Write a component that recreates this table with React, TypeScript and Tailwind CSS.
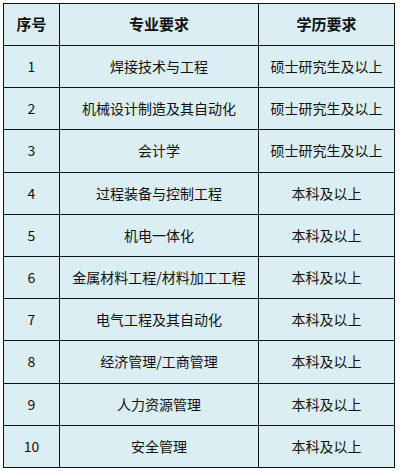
const rows = [
  ['1', '焊接技术与工程', '硕士研究生及以上'],
  ['2', '机械设计制造及其自动化', '硕士研究生及以上'],
  ['3', '会计学', '硕士研究生及以上'],
  ['4', '过程装备与控制工程', '本科及以上'],
  ['5', '机电一体化', '本科及以上'],
  ['6', '金属材料工程/材料加工工程', '本科及以上'],
  ['7', '电气工程及其自动化', '本科及以上'],
  ['8', '经济管理/工商管理', '本科及以上'],
  ['9', '人力资源管理', '本科及以上'],
  ['10', '安全管理', '本科及以上'],
];

export default function App() {
  return (
    <div className="w-[400px] h-[471px] bg-white pl-[3px] pt-[3px]" style={{ fontFamily: '"Noto Sans CJK SC", "Liberation Sans", sans-serif' }}>
      <table className="w-[391px] table-fixed border-collapse border border-[#111] bg-[#daeef3] text-[14px] text-[#111]">
        <colgroup>
          <col className="w-[56px]" />
          <col className="w-[199px]" />
          <col className="w-[136px]" />
        </colgroup>
        <thead>
          <tr className="h-[42px]">
            <th className="border border-[#111] text-center font-bold text-[15px]">序号</th>
            <th className="border border-[#111] text-center font-bold text-[15px]">专业要求</th>
            <th className="border border-[#111] text-center font-bold text-[15px]">学历要求</th>
          </tr>
        </thead>
        <tbody>
          {rows.map((r) => (
            <tr key={r[0]} className="h-[42.2px]">
              <td className="border border-[#111] text-center">{r[0]}</td>
              <td className="border border-[#111] text-center">{r[1]}</td>
              <td className="border border-[#111] text-center">{r[2]}</td>
            </tr>
          ))}
        </tbody>
      </table>
    </div>
  );
}
